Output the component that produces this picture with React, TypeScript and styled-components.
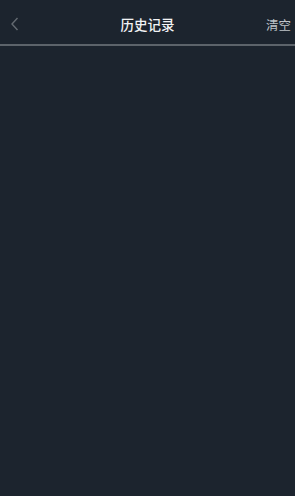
import React from 'react'
import styled, { createGlobalStyle } from 'styled-components'

const GlobalStyle = createGlobalStyle`
  html, body {
    margin: 0;
    padding: 0;
    background: #1c242e;
  }
  body {
    font-family: "Noto Sans CJK SC", "Noto Sans", sans-serif;
  }
`

const Page = styled.div`
  width: 295px;
  height: 496px;
  background: #1c242e;
  display: flex;
  flex-direction: column;
`

const NavBar = styled.header`
  height: 44px;
  display: grid;
  grid-template-columns: 60px 1fr 60px;
  align-items: center;
  padding-top: 2px;
  box-sizing: border-box;
  border-bottom: 2px solid #5c636a;
  height: 46px;
`

const BackButton = styled.button`
  justify-self: start;
  background: none;
  border: none;
  padding: 0 0 0 10px;
  height: 44px;
  display: flex;
  align-items: center;
  cursor: pointer;
`

const Title = styled.h1`
  margin: 0;
  text-align: center;
  font-size: 13.5px;
  font-weight: 500;
  color: #f2f3f5;
`

const ClearButton = styled.button`
  justify-self: end;
  background: none;
  border: none;
  padding: 0 4px 0 0;
  font-family: inherit;
  font-size: 12.5px;
  color: #bfc3c8;
  cursor: pointer;
`

const Content = styled.main`
  flex: 1;
`

const App = (): React.ReactElement => {
  return (
    <>
      <GlobalStyle />
      <Page>
        <NavBar>
          <BackButton aria-label="back">
            <svg width="9" height="14" viewBox="0 0 9 14">
              <path d="M7.5 1 L2 7 L7.5 13" fill="none" stroke="#646a71" strokeWidth="1.4" />
            </svg>
          </BackButton>
          <Title>历史记录</Title>
          <ClearButton>清空</ClearButton>
        </NavBar>
        <Content />
      </Page>
    </>
  )
}

export default App
